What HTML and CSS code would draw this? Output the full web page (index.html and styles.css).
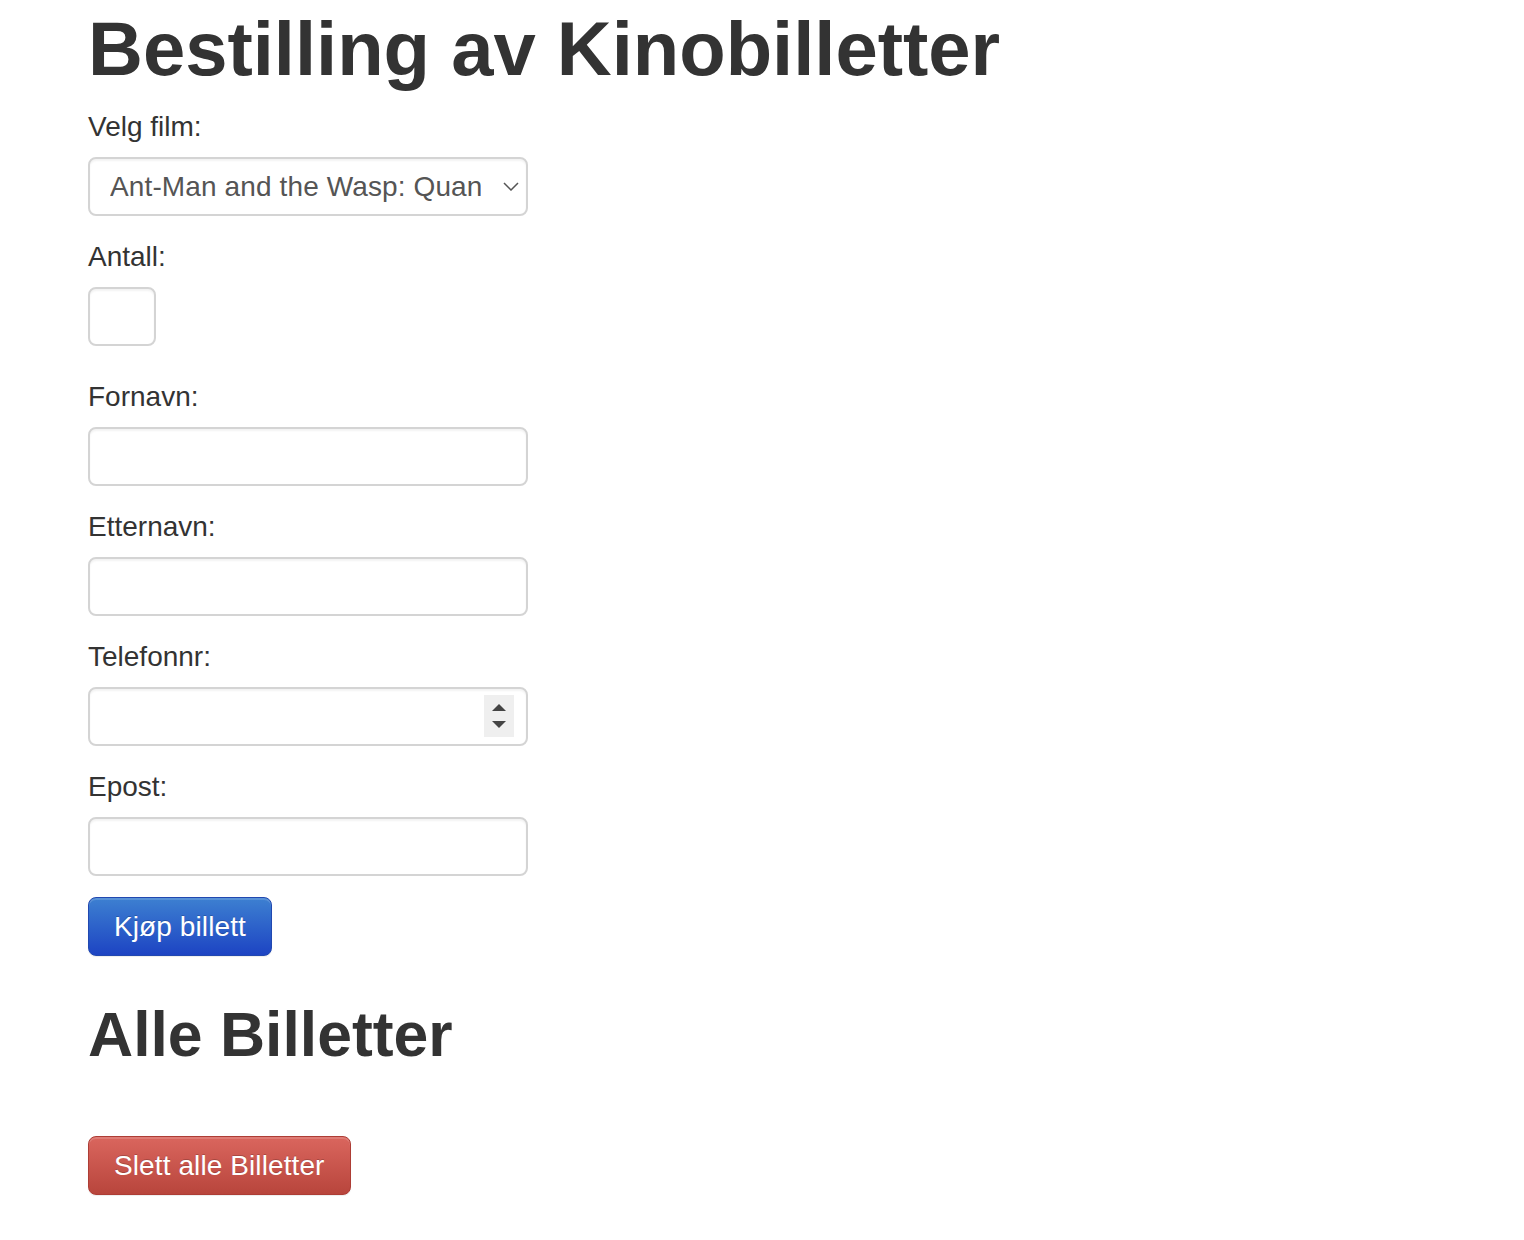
FILE: index.html
```html
<!DOCTYPE html>
<html lang="no">
<head>
<meta charset="utf-8">
<title>Bestilling av Kinobilletter</title>
<link rel="stylesheet" href="styles.css">
</head>
<body>
<div class="page">
  <h1 class="title">Bestilling av Kinobilletter</h1>
  <form class="order-form">
    <div class="group">
      <label class="label" for="film">Velg film:</label>
      <div class="select-wrap">
        <select id="film" class="control select">
          <option>Ant-Man and the Wasp: Quantumania</option>
        </select>
        <svg class="chevron" width="16" height="9" viewBox="0 0 16 9"><path d="M1 1 L8 8 L15 1" fill="none" stroke="#555" stroke-width="1.5"/></svg>
      </div>
    </div>
    <div class="group group-antall">
      <label class="label" for="antall">Antall:</label>
      <input id="antall" class="control small" type="text">
    </div>
    <div class="group">
      <label class="label" for="fornavn">Fornavn:</label>
      <input id="fornavn" class="control" type="text">
    </div>
    <div class="group">
      <label class="label" for="etternavn">Etternavn:</label>
      <input id="etternavn" class="control" type="text">
    </div>
    <div class="group">
      <label class="label" for="telefon">Telefonnr:</label>
      <div class="number-wrap">
        <input id="telefon" class="control number" type="number">
        <span class="spinner"><span class="tri up"></span><span class="tri down"></span></span>
      </div>
    </div>
    <div class="group">
      <label class="label" for="epost">Epost:</label>
      <input id="epost" class="control" type="text">
    </div>
    <button type="button" class="btn btn-primary">Kjøp billett</button>
  </form>
  <h2 class="subtitle">Alle Billetter</h2>
  <div class="tickets"></div>
  <button type="button" class="btn btn-danger">Slett alle Billetter</button>
</div>
</body>
</html>
```
FILE: styles.css
```css
html, body {
  margin: 0;
  padding: 0;
  background: #fff;
}
body {
  font-family: "Liberation Sans", Arial, sans-serif;
  color: #333;
  font-size: 28px;
}
.page {
  padding: 7px 0 40px 88px;
}
.title {
  font-size: 76px;
  font-weight: bold;
  line-height: 1.1;
  margin: 0 0 16px;
}
.order-form {
  display: flex;
  flex-direction: column;
  align-items: flex-start;
}
.group {
  display: flex;
  flex-direction: column;
  align-items: flex-start;
  margin-bottom: 21px;
}
.group-antall {
  margin-bottom: 31px;
}
.label {
  display: block;
  font-size: 28px;
  line-height: 40px;
  margin-bottom: 10px;
}
.control {
  box-sizing: border-box;
  width: 440px;
  height: 59px;
  margin: 0;
  border: 2px solid #d4d4d4;
  border-radius: 8px;
  background: #fff;
  box-shadow: inset 0 2px 2px rgba(0,0,0,0.05);
  font-family: "Liberation Sans", Arial, sans-serif;
  font-size: 28px;
  color: #555;
  padding: 0 22px;
  outline: none;
}
.small {
  width: 68px;
}
.select-wrap, .number-wrap {
  position: relative;
}
.select {
  -webkit-appearance: none;
  appearance: none;
  padding: 0 45px 0 20px;
  line-height: 55px;
  letter-spacing: 0.12px;
}
.chevron {
  position: absolute;
  top: 25px;
  left: 415px;
  pointer-events: none;
}
.number {
  -moz-appearance: textfield;
}
.number::-webkit-inner-spin-button,
.number::-webkit-outer-spin-button {
  -webkit-appearance: none;
  margin: 0;
}
.spinner {
  position: absolute;
  top: 8px;
  left: 396px;
  width: 30px;
  height: 42px;
  background: #efefef;
  display: flex;
  flex-direction: column;
  align-items: center;
  justify-content: center;
  gap: 10px;
}
.tri {
  width: 0;
  height: 0;
  border-left: 7px solid transparent;
  border-right: 7px solid transparent;
}
.tri.up {
  border-bottom: 7px solid #444;
}
.tri.down {
  border-top: 7px solid #444;
}
.btn {
  box-sizing: border-box;
  height: 59px;
  padding: 0 25px;
  font-family: "Liberation Sans", Arial, sans-serif;
  font-size: 28px;
  letter-spacing: 0.1px;
  line-height: 57px;
  color: #fff;
  border-radius: 8px;
  border: 1px solid;
  cursor: pointer;
  text-shadow: 0 -1px 0 rgba(0,0,0,0.2);
  box-shadow: inset 0 2px 0 rgba(255,255,255,0.15), 0 1px 1px rgba(0,0,0,0.075);
}
.btn-primary {
  background: linear-gradient(to bottom, #3d80d1 0%, #1d44c3 100%);
  border-color: #2148b0;
}
.btn-danger {
  background: linear-gradient(to bottom, #da665e 0%, #b8453c 100%);
  border-color: #ad3d35;
}
.subtitle {
  font-size: 62.5px;
  font-weight: bold;
  line-height: 1.1;
  margin: 44px 0 0;
}
.tickets {
  height: 68px;
}
```
